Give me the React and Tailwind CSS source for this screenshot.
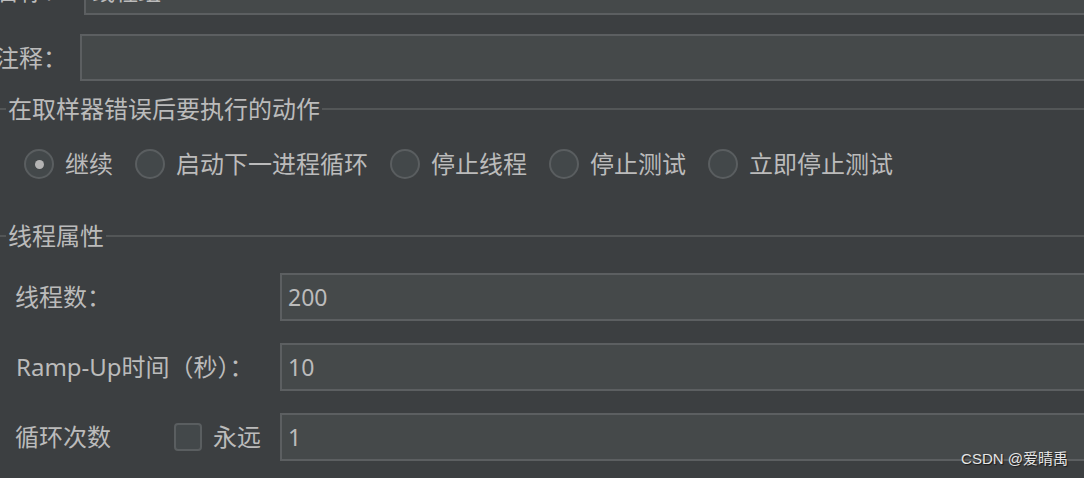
import React from 'react';

const font = { fontFamily: '"Noto Sans", "Noto Sans CJK SC", sans-serif' };

function Field({ value, className = '' }) {
  return (
    <div className={`flex-1 -mr-[6px] bg-[#45494a] border-2 border-[#5c5f61] flex items-center pl-[6px] ${className}`}>
      {value && <span className="text-[23px] text-[#bbbbbb]">{value}</span>}
    </div>
  );
}

function GroupTitle({ children }) {
  return (
    <div className="flex items-center h-[28px]">
      <div className="w-[6px] h-[2px] bg-[#535657]" />
      <span className="px-[2px] text-[24px] leading-none">{children}</span>
      <div className="flex-1 h-[2px] bg-[#535657]" />
    </div>
  );
}

function Radio({ label, checked }) {
  return (
    <div className="flex items-center mr-[22px]">
      <div className="w-[30px] h-[30px] rounded-full border-2 border-[#5a5e60] bg-[#43484a] flex items-center justify-center">
        {checked && <div className="w-[9px] h-[9px] rounded-full bg-[#b4b4b4]" />}
      </div>
      <span className="ml-[11px] text-[24px]">{label}</span>
    </div>
  );
}

export default function App() {
  return (
    <div className="relative w-[1084px] h-[478px] overflow-hidden bg-[#3c3f41] text-[#bbbbbb]" style={font}>
      <div className="-mt-[33px] h-[48px] flex">
        <div className="w-[84px] shrink-0 flex items-center">
          <span className="-ml-[5px] text-[24px]">名称：</span>
        </div>
        <Field value="线程组" />
      </div>

      <div className="mt-[19px] h-[47px] flex">
        <div className="w-[80px] shrink-0 flex items-center">
          <span className="-ml-[5px] text-[24px]">注释：</span>
        </div>
        <Field />
      </div>

      <div className="mt-[14px]">
        <GroupTitle>在取样器错误后要执行的动作</GroupTitle>
      </div>

      <div className="mt-[26px] h-[30px] flex items-center pl-[24px]">
        <Radio label="继续" checked />
        <Radio label="启动下一进程循环" />
        <Radio label="停止线程" />
        <Radio label="停止测试" />
        <Radio label="立即停止测试" />
      </div>

      <div className="mt-[43px]">
        <GroupTitle>线程属性</GroupTitle>
      </div>

      <div className="mt-[23px] h-[48px] flex pl-[15px]">
        <div className="w-[265px] flex items-center text-[24px]">线程数：</div>
        <Field value="200" />
      </div>

      <div className="mt-[22px] h-[48px] flex pl-[16px]">
        <div className="w-[264px] flex items-center text-[24px]">Ramp-Up时间（秒）：</div>
        <Field value="10" />
      </div>

      <div className="mt-[22px] h-[48px] flex items-center pl-[15px]">
        <span className="w-[159px] text-[24px]">循环次数</span>
        <div className="w-[28px] h-[28px] rounded-[4px] border-2 border-[#5a5e60] bg-[#43484a]" />
        <span className="ml-[11px] w-[67px] text-[24px]">永远</span>
        <Field className="self-stretch" value="1" />
      </div>

      <div
        className="absolute right-[16px] bottom-[8px] text-[15px] text-[#e6e6e6]"
        style={{ textShadow: '1px 1px 1px #1a1a1a', fontFamily: '"Liberation Sans", "Noto Sans CJK SC", sans-serif' }}
      >
        CSDN @爱晴禹
      </div>
    </div>
  );
}
